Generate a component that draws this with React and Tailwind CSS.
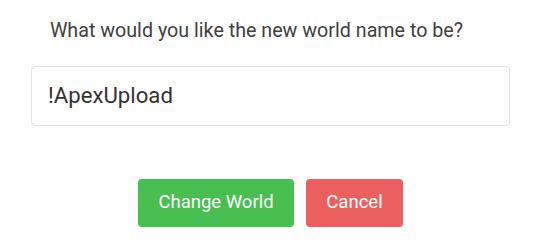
export default function App() {
  return (
    <div className="w-[550px] h-[246px] bg-white font-['Roboto',sans-serif]">
      <div className="pt-[17px] pl-[31px] w-[510px]">
        <p className="text-center text-[19.7px] leading-[28px] text-[#404040] pr-[28px]">
          What would you like the new world name to be?
        </p>
        <div className="mt-[21px] h-[60px] border border-[#e3e3e3] rounded-[4px] flex items-center pl-[16px] text-[22.2px] text-[#333]">
          !ApexUpload
        </div>
        <div className="mt-[53px] flex justify-center gap-[12px]">
          <button className="h-[48px] w-[156px] rounded-[4px] bg-[#48bf50] text-white text-[18.5px]">Change World</button>
          <button className="h-[48px] w-[97px] rounded-[4px] bg-[#ec5f5f] text-white text-[18.5px]">Cancel</button>
        </div>
      </div>
    </div>
  );
}
